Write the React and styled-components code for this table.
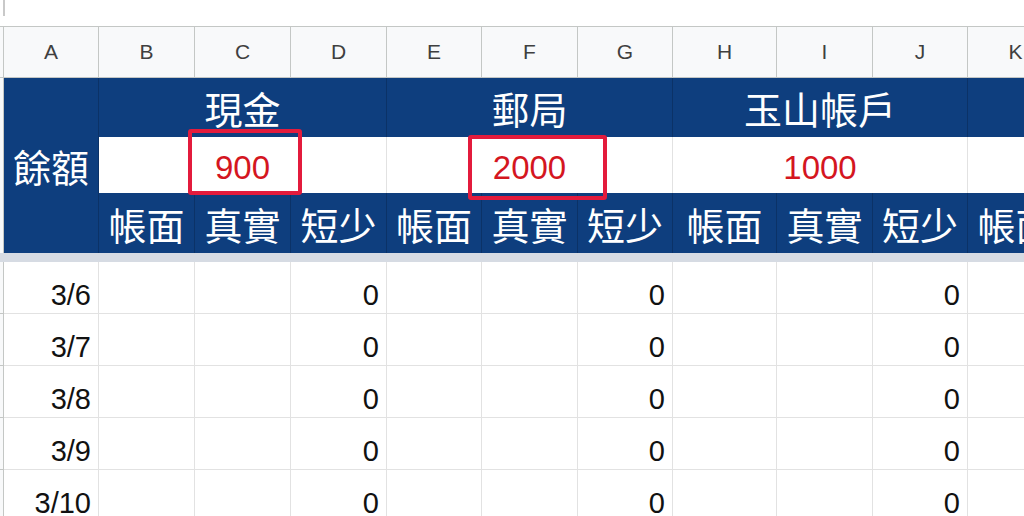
import React from "react";
import styled, { createGlobalStyle } from "styled-components";

const NAVY = "#0e3e7e";
const GRID = "#e2e2e2";
const HEAD_LINE = "#c4c7c5";
const CJK = `"Noto Sans CJK TC", "Noto Sans CJK SC", sans-serif`;
const LATIN = `"Liberation Sans", Arial, sans-serif`;

const GlobalStyle = createGlobalStyle`
  html, body {
    margin: 0;
    padding: 0;
    background: #fff;
    overflow: hidden;
  }
  body {
    width: 1024px;
    height: 516px;
  }
`;

const Sheet = styled.div`
  position: relative;
  width: 1024px;
  height: 516px;
  overflow: hidden;
  background: #fff;
`;

const TopStrip = styled.div`
  height: 26px;
  position: relative;
  &::before {
    content: "";
    position: absolute;
    left: 3px;
    top: 0;
    width: 2px;
    height: 16px;
    background: #c9c9c9;
  }
`;

const Grid = styled.div`
  display: grid;
  width: 1064px;
  grid-template-columns: 4px 95px 96px 96px 96px 95px 96px 95px 104px 96px 95px 96px;
  grid-template-rows: 52px 59px 56px 60px 9px repeat(5, 52px);
`;

const Stub = styled.div`
  box-sizing: border-box;
  background: #f8f9fa;
  border-right: 1px solid ${HEAD_LINE};
  border-top: ${(p) => (p.$top ? `1px solid ${HEAD_LINE}` : "none")};
  border-bottom: ${(p) => (p.$line ? `1px solid ${HEAD_LINE}` : "none")};
  grid-row: ${(p) => (p.$rows ? `span ${p.$rows}` : "auto")};
`;

const ColHead = styled.div`
  box-sizing: border-box;
  display: flex;
  align-items: center;
  justify-content: center;
  background: #f8f9fa;
  border-top: 1px solid ${HEAD_LINE};
  border-right: 1px solid ${HEAD_LINE};
  border-bottom: 1px solid ${HEAD_LINE};
  color: #3f3f3f;
  font-family: ${LATIN};
  font-size: 21px;
`;

const SideCell = styled.div`
  grid-row: span 3;
  box-sizing: border-box;
  display: flex;
  align-items: center;
  justify-content: center;
  background: ${NAVY};
  border-right: 1px solid rgba(0, 0, 0, 0.18);
  color: #fff;
  font-family: ${CJK};
  font-size: 38px;
  white-space: nowrap;
`;

const TitleCell = styled.div`
  grid-column: span ${(p) => p.$span || 1};
  box-sizing: border-box;
  display: flex;
  align-items: center;
  justify-content: center;
  background: ${NAVY};
  border-right: 1px solid rgba(0, 0, 0, 0.18);
  color: #fff;
  font-family: ${CJK};
  font-size: 38px;
  white-space: nowrap;
  overflow: hidden;
`;

const BalanceCell = styled.div`
  grid-column: span ${(p) => p.$span || 1};
  box-sizing: border-box;
  display: flex;
  align-items: center;
  justify-content: center;
  padding-top: 6px;
  background: #fff;
  border-right: 1px solid ${GRID};
  color: #d4161f;
  font-family: ${LATIN};
  font-size: 33px;
`;

const SubCell = styled.div`
  box-sizing: border-box;
  display: flex;
  align-items: center;
  justify-content: center;
  background: ${NAVY};
  border-right: 1px solid rgba(0, 0, 0, 0.18);
  color: #fff;
  font-family: ${CJK};
  font-size: 38px;
  white-space: nowrap;
  overflow: hidden;
`;

const FreezeBar = styled.div`
  grid-column: 1 / -1;
  background: #d6dbe3;
`;

const DataCell = styled.div`
  box-sizing: border-box;
  display: flex;
  align-items: flex-end;
  justify-content: flex-end;
  padding: 0 7px 1px 0;
  background: #fff;
  border-right: 1px solid ${GRID};
  border-bottom: 1px solid ${GRID};
  color: #111;
  font-family: ${LATIN};
  font-size: 29px;
  white-space: nowrap;
`;

const Mark = styled.div`
  position: absolute;
  left: ${(p) => p.$x}px;
  top: ${(p) => p.$y}px;
  width: ${(p) => p.$w}px;
  height: ${(p) => p.$h}px;
  box-sizing: border-box;
  border: 4px solid #e31b3c;
  border-radius: 3px;
  pointer-events: none;
`;

const letters = ["A", "B", "C", "D", "E", "F", "G", "H", "I", "J", "K"];
const subs = ["帳面", "真實", "短少", "帳面", "真實", "短少", "帳面", "真實", "短少", "帳面"];
const dates = ["3/6", "3/7", "3/8", "3/9", "3/10"];
const groups = [
  { title: "現金", amount: "900" },
  { title: "郵局", amount: "2000" },
  { title: "玉山帳戶", amount: "1000" },
];

export default function App() {
  return (
    <Sheet>
      <GlobalStyle />
      <TopStrip />
      <Grid>
        <Stub $top $line />
        {letters.map((l) => (
          <ColHead key={l}>{l}</ColHead>
        ))}

        <Stub $rows={3} />
        <SideCell>餘額</SideCell>
        {groups.map((g) => (
          <TitleCell key={g.title} $span={3}>
            {g.title}
          </TitleCell>
        ))}
        <TitleCell />

        {groups.map((g) => (
          <BalanceCell key={g.amount} $span={3}>
            {g.amount}
          </BalanceCell>
        ))}
        <BalanceCell />

        {subs.map((s, i) => (
          <SubCell key={i}>{s}</SubCell>
        ))}

        <FreezeBar />

        {dates.map((d) => (
          <React.Fragment key={d}>
            <Stub $line />
            <DataCell>{d}</DataCell>
            {[0, 1, 2].map((g) => (
              <React.Fragment key={g}>
                <DataCell />
                <DataCell />
                <DataCell>0</DataCell>
              </React.Fragment>
            ))}
            <DataCell />
          </React.Fragment>
        ))}
      </Grid>
      <Mark $x={188} $y={129} $w={114} $h={66} />
      <Mark $x={468} $y={135} $w={139} $h={65} />
    </Sheet>
  );
}
